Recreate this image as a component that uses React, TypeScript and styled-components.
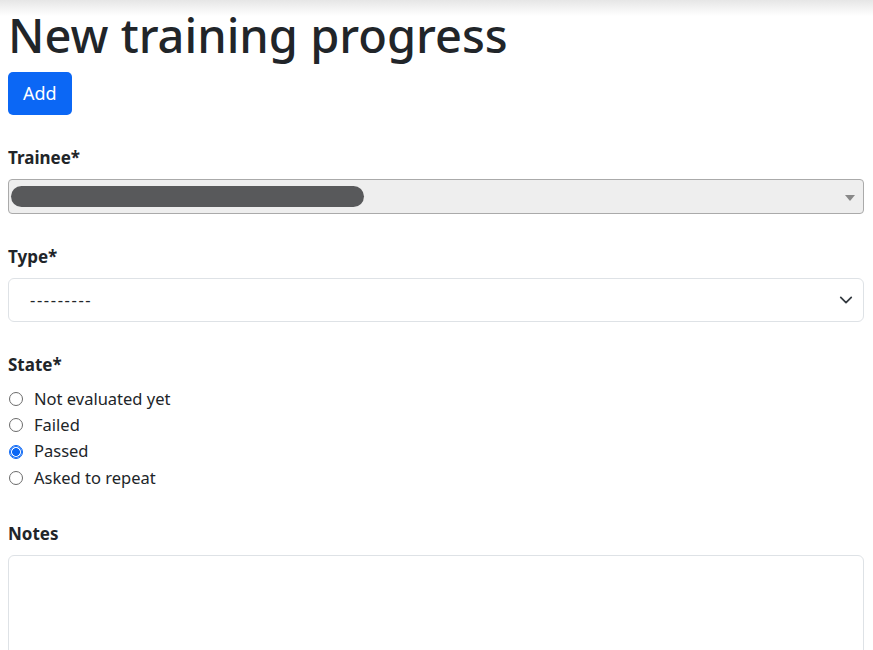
import React, { useState } from 'react';
import styled, { createGlobalStyle } from 'styled-components';

const GlobalStyle = createGlobalStyle`
  html, body {
    margin: 0;
    padding: 0;
  }
  body {
    font-family: "Noto Sans", "Open Sans", sans-serif;
    font-size: 18px;
    line-height: 1.5;
    color: #212529;
    background: linear-gradient(#e6e6e6 0, #ffffff 16px) no-repeat, #ffffff;
  }
`;

const Page = styled.div`
  padding: 6px 9px 0 8px;
`;

const Title = styled.h1`
  margin: 0 0 8px;
  font-size: 47px;
  font-weight: 500;
  line-height: 58px;
  color: #212529;
`;

const PrimaryButton = styled.button`
  display: block;
  font-family: inherit;
  font-size: 18px;
  line-height: 27px;
  padding: 8px 15px;
  color: #fff;
  background-color: #0b67f5;
  border: none;
  border-radius: 5px;
  cursor: pointer;
`;

const Field = styled.div`
  margin-top: 29px;
`;

const Label = styled.label`
  display: block;
  font-weight: 700;
  font-size: 17px;
  line-height: 27px;
  margin-bottom: 8px;
`;

const Select2Box = styled.div`
  position: relative;
  height: 35px;
  box-sizing: border-box;
  background: #eeeeee;
  border: 1px solid #aaaaaa;
  border-radius: 4px;
  display: flex;
  align-items: center;
  padding: 0 2px;
`;

const Redacted = styled.span`
  display: block;
  width: 353px;
  height: 21px;
  border-radius: 11px;
  background: #58595b;
`;

const Caret = styled.span`
  position: absolute;
  right: 8px;
  top: 15px;
  border-left: 5px solid transparent;
  border-right: 5px solid transparent;
  border-top: 6px solid #888;
`;

const SelectBox = styled.div`
  height: 44px;
  box-sizing: border-box;
  border: 1px solid #dee2e6;
  border-radius: 6px;
  display: flex;
  align-items: center;
  justify-content: space-between;
  padding: 0 10px 0 21px;
  font-size: 16.5px;
  color: #212529;
`;

const Placeholder = styled.span`
  letter-spacing: 1.6px;
`;

const RadioList = styled.div`
  display: flex;
  flex-direction: column;
`;

const RadioRow = styled.label`
  display: flex;
  align-items: center;
  height: 26.3px;
  font-size: 16.5px;
  cursor: pointer;
`;

const RadioDot = styled.span<{ $checked: boolean }>`
  box-sizing: border-box;
  width: 14px;
  height: 14px;
  margin: 0 11px 0 1px;
  border-radius: 50%;
  border: 1px solid ${(p) => (p.$checked ? '#0b67f5' : '#6b6b6b')};
  background: ${(p) =>
    p.$checked
      ? 'radial-gradient(circle, #0b67f5 0 3.6px, #fff 4.2px)'
      : '#fff'};
  box-shadow: ${(p) => (p.$checked ? 'inset 0 0 0 1px #0b67f5' : 'none')};
  flex-shrink: 0;
`;

const NotesArea = styled.textarea`
  display: block;
  width: 100%;
  box-sizing: border-box;
  height: 140px;
  border: 1px solid #dee2e6;
  border-radius: 6px;
  resize: none;
  font-family: inherit;
  font-size: 17px;
`;

const states = ['Not evaluated yet', 'Failed', 'Passed', 'Asked to repeat'];

export default function App() {
  const [state, setState] = useState('Passed');

  return (
    <Page>
      <GlobalStyle />
      <Title>New training progress</Title>
      <PrimaryButton type="button">Add</PrimaryButton>

      <Field>
        <Label>Trainee*</Label>
        <Select2Box>
          <Redacted />
          <Caret />
        </Select2Box>
      </Field>

      <Field>
        <Label>Type*</Label>
        <SelectBox>
          <Placeholder>---------</Placeholder>
          <svg width="14" height="14" viewBox="0 0 16 16">
            <path d="M2 5l6 6 6-6" fill="none" stroke="#343a40" strokeWidth="2" strokeLinecap="round" strokeLinejoin="round" />
          </svg>
        </SelectBox>
      </Field>

      <Field>
        <Label>State*</Label>
        <RadioList>
          {states.map((s) => (
            <RadioRow key={s} onClick={() => setState(s)}>
              <RadioDot $checked={state === s} />
              {s}
            </RadioRow>
          ))}
        </RadioList>
      </Field>

      <Field>
        <Label>Notes</Label>
        <NotesArea />
      </Field>
    </Page>
  );
}
